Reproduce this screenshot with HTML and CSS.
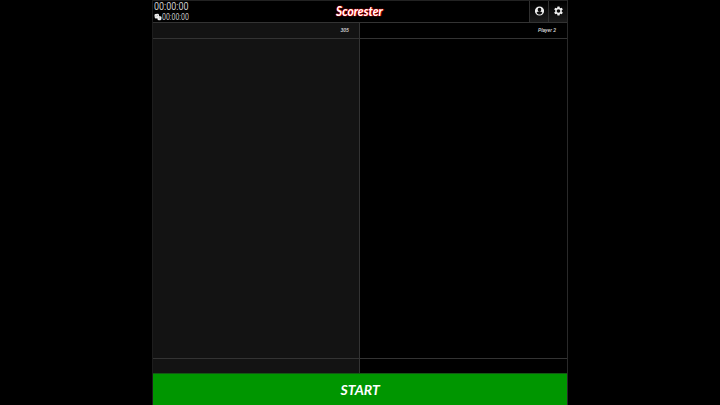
FILE: index.html
```html
<!DOCTYPE html>
<html lang="en">
<head>
<meta charset="utf-8">
<title>Scorester</title>
<link rel="stylesheet" href="styles.css">
</head>
<body>
<main class="app">
  <header class="topbar">
    <div class="timers">
      <div class="clock">00:00:00</div>
      <div class="turn">
        <svg class="dice" viewBox="0 0 14 13"><rect x="1" y="1" width="8" height="8" rx="2" transform="rotate(-8 5 5)"/><rect x="6" y="5" width="7" height="7" rx="2"/><path d="M3 5h1M6 4h1M9 8h1" stroke="#333"/></svg>
        <span class="turn-clock">00:00:00</span>
      </div>
    </div>
    <h1 class="logo"><span>Scorester</span></h1>
    <nav class="actions">
      <button class="action" aria-label="Profile"><svg viewBox="0 0 24 24"><path fill-rule="evenodd" d="M12 2a10 10 0 1 0 0 20 10 10 0 0 0 0-20zM12 5a4 4 0 1 1 0 8 4 4 0 0 1 0-8zM12 19.500c-2.700 0-5-1.300-6.300-3.300.3-2 4.200-3.100 6.300-3.100s6 1.100 6.300 3.100c-1.300 2-3.600 3.300-6.300 3.300z"/></svg></button>
      <button class="action" aria-label="Settings"><svg viewBox="0 0 24 24"><path fill-rule="evenodd" d="M9.800 2h4.400l.6 3 1.500.8 2.900-1 2.200 3.800-2.300 2v2.800l2.300 2-2.200 3.800-2.900-1-1.500.8-.6 3H9.800l-.6-3-1.500-.8-2.900 1-2.200-3.800 2.300-2v-2.800l-2.300-2 2.200-3.800 2.900 1 1.500-.8zM12 8a4 4 0 1 0 0 8 4 4 0 0 0 0-8z"/></svg></button>
    </nav>
  </header>
  <section class="players">
    <article class="player active"><h2 class="name"><span>305</span></h2><div class="scores"></div><div class="total"></div></article>
    <article class="player"><h2 class="name"><span>Player 2</span></h2><div class="scores"></div><div class="total"></div></article>
  </section>
  <button class="start"><span>START</span></button>
</main>
</body>
</html>
```
FILE: styles.css
```css
* { box-sizing: border-box; }
body { margin: 0; background: #000; color: #fff; font-family: "Liberation Sans", sans-serif; }
button { margin: 0; padding: 0; border: 0; background: none; color: inherit; }
.app { width: 416px; height: 405px; margin-left: 152px; display: flex; flex-direction: column; border-left: 1px solid #1d1d1d; border-right: 1px solid #292929; overflow: hidden; }
.topbar { height: 23px; display: grid; grid-template-columns: 1fr auto 1fr; border-top: 1px solid #222; border-bottom: 1px solid #333; }
.timers { padding-left: 1px; color: #c9c9c9; white-space: nowrap; }
.clock { height: 11px; font: 11.500px/11px "Roboto", sans-serif; transform: scaleX(.78); transform-origin: left; }
.turn { display: flex; height: 10px; align-items: center; }
.dice { width: 8px; height: 8px; fill: #eee; }
.turn-clock { font: 8.500px/10px "Roboto", sans-serif; transform: scaleX(.82); transform-origin: left; }
.logo { margin: 0; font: italic 700 13px/20px "Lato", cursive; text-shadow: 0 0 1px #f00, 0 0 1px #f00, 1px 0 1px #d00; }
.logo span { display: inline-block; transform: translateX(-1px) scaleX(.92); }
.actions { display: flex; justify-content: flex-end; }
.action { width: 19px; height: 21px; display: flex; align-items: center; justify-content: center; border-left: 1px solid #303030; background: linear-gradient(#000, #1b1b1b); }
.action svg { width: 11px; height: 11px; fill: #eee; transform: translateY(-.5px); }
.players { flex: 1; display: grid; grid-template-columns: 207px 1fr; }
.player { display: grid; grid-template-rows: 16px 1fr 15px; }
.player.active { background: #131313; border-right: 1px solid #333; }
.name { margin: 0; padding-right: 11px; text-align: right; font: italic 500 6px/14px "Roboto", sans-serif; color: #ddd; border-bottom: 1px solid #333; }
.name span { display: inline-block; transform: scaleX(.86); transform-origin: right; }
.active .name { padding-right: 10px; }
.total { border-top: 1px solid #333; }
.start { height: 32px; border-top: 1px solid #145814; background: #009600; color: #fff; font: italic 700 13px/30px "Lato", cursive; }
.start span { display: inline-block; transform: scaleX(1.08); }
```
